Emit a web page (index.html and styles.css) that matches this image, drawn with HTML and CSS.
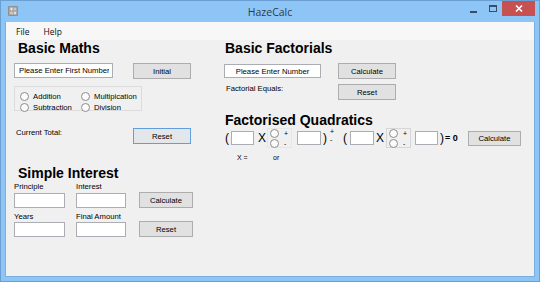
FILE: index.html
```html
<!DOCTYPE html>
<html lang="en">
<head>
    <meta charset="UTF-8">
    <meta name="viewport" content="width=device-width, initial-scale=1.0">
    <title>HazeCalc</title>
    <link rel="stylesheet" href="styles.css">
</head>
<body>
    <div class="window">
        <div class="titlebar">
            <svg class="app-icon" width="10" height="10" viewBox="0 0 10 10">
                <rect x="0" y="0" width="10" height="10" rx="1" fill="#8f8f8f"/>
                <rect x="1" y="1" width="8" height="8" fill="#a9a9a9"/>
                <path d="M2 3h3M3.5 1.5v3M6 3h2M2 7h3M6 6.3h2M6 7.7h2" stroke="#e8e8e8" stroke-width="1"/>
            </svg>
            <div class="title">HazeCalc</div>
            <div class="caption">
                <span class="cap-min"></span>
                <span class="cap-max"></span>
                <span class="cap-close">
                    <svg width="8" height="7" viewBox="0 0 8 7">
                        <path d="M1 0.5l6 6M7 0.5l-6 6" stroke="#fff" stroke-width="1.6"/>
                    </svg>
                </span>
            </div>
        </div>

        <div class="client">
            <div class="menubar">
                <span class="menu-item">File</span>
                <span class="menu-item">Help</span>
            </div>

            <div class="content">
                <!-- left side: basic maths + simple interest -->
                <div class="col">
                    <h2 class="heading">Basic Maths</h2>
                    <div class="row row-first">
                        <input class="textbox tb-first" type="text" value="Please Enter First Number">
                        <button class="btn btn-initial">Initial</button>
                    </div>
                    <div class="group ops">
                        <label class="radio"><span class="dot"></span>Addition</label>
                        <label class="radio"><span class="dot"></span>Multipication</label>
                        <label class="radio"><span class="dot"></span>Subtraction</label>
                        <label class="radio"><span class="dot"></span>Division</label>
                    </div>
                    <div class="row row-total">
                        <span class="lbl lbl-total">Current Total:</span>
                        <button class="btn btn-focus btn-reset">Reset</button>
                    </div>

                    <h2 class="heading heading-interest">Simple Interest</h2>
                    <div class="interest">
                        <span class="lbl lbl-top">Principle</span>
                        <span class="lbl lbl-top">Interest</span>
                        <button class="btn btn-si btn-si-calc">Calculate</button>
                        <input class="textbox tb-si" type="text">
                        <input class="textbox tb-si" type="text">
                        <span class="lbl lbl-bottom">Years</span>
                        <span class="lbl lbl-bottom">Final Amount</span>
                        <button class="btn btn-si btn-si-reset">Reset</button>
                        <input class="textbox tb-si" type="text">
                        <input class="textbox tb-si" type="text">
                    </div>
                </div>

                <!-- right side: factorials + quadratics -->
                <div class="col">
                    <h2 class="heading heading-right">Basic Factorials</h2>
                    <div class="row row-fact">
                        <input class="textbox tb-fact" type="text" value="Please Enter Number">
                        <button class="btn btn-fact">Calculate</button>
                    </div>
                    <div class="row row-fact2">
                        <span class="lbl lbl-fact">Factorial Equals:</span>
                        <button class="btn btn-fact-reset">Reset</button>
                    </div>

                    <h2 class="heading heading-right heading-quad">Factorised Quadratics</h2>
                    <div class="eq">
                        <span class="sym sym-open1">(</span>
                        <input class="textbox tb-eq tb-eq1" type="text">
                        <span class="sym sym-x1">X</span>
                        <div class="sign-group sign-group1">
                            <label class="sign"><span class="dot"></span>+</label>
                            <label class="sign"><span class="dot"></span>-</label>
                        </div>
                        <input class="textbox tb-eq tb-eq2" type="text">
                        <span class="sym sym-close1">)</span>
                        <span class="pm"><span>+</span><span>-</span></span>
                        <span class="sym sym-open2">(</span>
                        <input class="textbox tb-eq tb-eq3" type="text">
                        <span class="sym sym-x2">X</span>
                        <div class="sign-group sign-group2">
                            <label class="sign"><span class="dot"></span>+</label>
                            <label class="sign"><span class="dot"></span>-</label>
                        </div>
                        <input class="textbox tb-eq tb-eq4" type="text">
                        <span class="sym sym-close2">)</span>
                        <span class="equals">= 0</span>
                        <button class="btn btn-eq">Calculate</button>
                    </div>
                    <div class="eq-notes">
                        <span class="note note-x">X =</span>
                        <span class="note note-or">or</span>
                    </div>
                </div>
            </div>
        </div>
    </div>
</body>
</html>
```

FILE: styles.css
```css
* {
    box-sizing: border-box;
}

body {
    margin: 0;
    background-color: #8dc6f6;
    font-family: "Liberation Sans", Arial, sans-serif;
    color: #000;
}

/* window frame */
.window {
    width: 540px;
    height: 282px;
    border: 1px solid #6c9fd1;
    background-color: #8dc6f6;
    display: flex;
    flex-direction: column;
}

.titlebar {
    height: 21px;
    flex-shrink: 0;
    display: grid;
    grid-template-columns: 1fr auto 1fr;
    align-items: start;
}

.app-icon {
    margin: 5px 0 0 7px;
    display: block;
}

.title {
    font-family: "Open Sans", "Noto Sans", sans-serif;
    font-size: 10.5px;
    line-height: 21px;
    padding-top: 1px;
    color: #2d3a48;
}

.caption {
    justify-self: end;
    display: flex;
    align-items: flex-start;
    margin-right: 4px;
}

.cap-min {
    width: 7px;
    height: 2px;
    margin-top: 10px;
    background-color: #3b4d62;
}

.cap-max {
    width: 8px;
    height: 7px;
    margin: 4px 0 0 12px;
    border: 1px solid #3b4d62;
    border-top-width: 2px;
}

.cap-close {
    width: 33px;
    height: 15px;
    margin-left: 5px;
    background-color: #c75050;
    display: flex;
    align-items: center;
    justify-content: center;
}

.cap-close svg {
    display: block;
}

/* client area */
.client {
    flex: 1;
    margin: 0 4px 4px 4px;
    border: 1px solid #7aaedf;
    border-top: none;
    background-color: #f0f0f0;
    display: flex;
    flex-direction: column;
}

.menubar {
    height: 18px;
    background-color: #f7f7f7;
    display: flex;
    padding-left: 3px;
    font-family: "Open Sans", "Noto Sans", sans-serif;
    font-size: 8.5px;
    line-height: 18px;
    color: #111;
}

.menu-item {
    padding: 1px 7px 0 7px;
}

.content {
    display: grid;
    grid-template-columns: 210px 1fr;
    padding-left: 8px;
}

.col {
    display: flex;
    flex-direction: column;
    align-items: flex-start;
}

.heading {
    margin: 0 0 0 4px;
    font-size: 14px;
    line-height: 16px;
    font-weight: bold;
}

.heading-right {
    margin-left: 1px;
}

.row {
    display: flex;
    align-items: flex-start;
}

/* controls */
.textbox {
    display: block;
    margin: 0;
    padding: 0 3px;
    border: 1px solid #abadb3;
    background-color: #fff;
    font-family: "Liberation Sans", Arial, sans-serif;
    font-size: 7.7px;
    color: #000;
    outline: none;
}

.btn {
    display: block;
    margin: 0;
    padding: 0;
    border: 1px solid #adadad;
    background-color: #e1e1e1;
    font-family: "Liberation Sans", Arial, sans-serif;
    font-size: 7.7px;
    color: #000;
}

.btn-focus {
    border-color: #5f9fdc;
    background-color: #e3e6ea;
}

.lbl {
    font-size: 7.7px;
    line-height: 9px;
    white-space: nowrap;
}

/* basic maths */
.row-first {
    margin-top: 7px;
}

.tb-first {
    width: 99px;
    height: 15px;
    padding-left: 4px;
}

.btn-initial {
    width: 58px;
    height: 16px;
    margin-left: 20px;
}

.group {
    border: 1px solid #dcdcdc;
}

.ops {
    margin-top: 7px;
    width: 128px;
    height: 25px;
    padding: 4px 0 0 5px;
    display: grid;
    grid-template-columns: 61px auto;
    grid-auto-rows: 11px;
}

.radio {
    display: flex;
    align-items: center;
    gap: 4px;
    font-size: 7.7px;
    white-space: nowrap;
}

.dot {
    width: 9px;
    height: 9px;
    flex-shrink: 0;
    border: 1px solid #8d8d8d;
    border-radius: 50%;
    background-color: #fbfbfb;
}

.row-total {
    margin-top: 17px;
}

.lbl-total {
    width: 119px;
    padding-left: 2px;
    margin-top: 0;
}

.btn-reset {
    width: 58px;
    height: 16px;
}

/* simple interest */
.heading-interest {
    margin-top: 21px;
}

.interest {
    margin-top: 1px;
    display: grid;
    grid-template-columns: 62px 63px 54px;
    grid-template-rows: 11px 15px 14px 15px;
}

.lbl-top {
    align-self: start;
    line-height: 10px;
}

.lbl-bottom {
    align-self: end;
    line-height: 10px;
}

.tb-si {
    width: 51px;
    height: 15px;
}

.tb-si:nth-of-type(2),
.tb-si:nth-of-type(4) {
    width: 50px;
}

.btn-si {
    width: 54px;
    height: 16px;
    align-self: end;
}

.btn-si-calc {
    grid-row: 1 / 3;
    grid-column: 3;
}

.btn-si-reset {
    grid-row: 3 / 5;
    grid-column: 3;
}

/* basic factorials */
.row-fact {
    margin-top: 7px;
}

.tb-fact {
    width: 97px;
    height: 14px;
    margin-top: 1px;
    text-align: center;
}

.btn-fact {
    width: 58px;
    height: 16px;
    margin-left: 17px;
}

.row-fact2 {
    margin-top: 5px;
}

.lbl-fact {
    width: 114px;
    padding-left: 2px;
}

.btn-fact-reset {
    width: 58px;
    height: 16px;
}

/* factorised quadratics */
.heading-quad {
    margin-top: 13px;
    line-height: 15px;
}

.eq {
    display: flex;
    align-items: center;
    height: 20px;
}

.sym {
    display: block;
    font-size: 12px;
    line-height: 20px;
}

.sym-open1 { width: 7px; padding-left: 1px; }
.sym-x1 { width: 13px; padding-left: 4px; }
.sym-close1 { width: 8px; padding-left: 2px; }
.sym-open2 { width: 13px; padding-left: 6px; }
.sym-x2 { width: 12px; padding-left: 2px; }
.sym-close2 { width: 6px; padding-left: 2px; }

.tb-eq {
    height: 14px;
}

.tb-eq1 { width: 23px; }
.tb-eq2 { width: 24px; margin-left: 5px; }
.tb-eq3 { width: 24px; }
.tb-eq4 { width: 23px; margin-left: 4px; }

.sign-group {
    width: 25px;
    height: 20px;
    padding: 0 0 0 2px;
    display: flex;
    flex-direction: column;
    gap: 1px;
}

.sign-group1 {
    border: 1px solid #e6e6e6;
}

.sign-group2 {
    border: 1px solid #d6d6d6;
}

.sign {
    display: flex;
    align-items: center;
    gap: 5px;
    height: 9px;
    font-size: 7px;
    line-height: 9px;
}

.pm {
    width: 8px;
    padding-left: 1px;
    display: flex;
    flex-direction: column;
    font-size: 7px;
    line-height: 8px;
    margin-top: -4px;
}

.equals {
    width: 24px;
    font-size: 9px;
    font-weight: bold;
    line-height: 20px;
    padding-left: 1px;
}

.btn-eq {
    width: 53px;
    height: 15px;
}

.eq-notes {
    margin-top: 5px;
    display: flex;
    font-size: 7px;
    line-height: 10px;
}

.note-x {
    margin-left: 13px;
    width: 36px;
}
```
